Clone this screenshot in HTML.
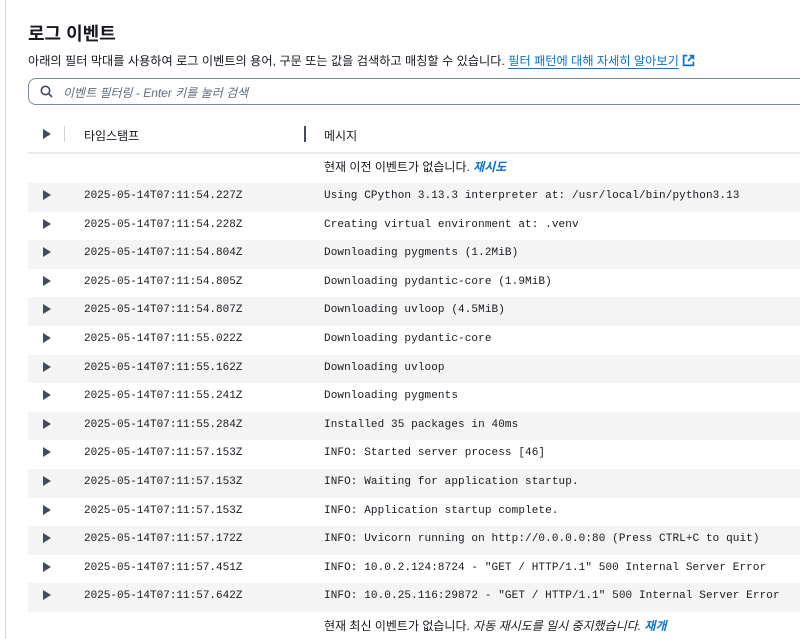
<!DOCTYPE html>
<html><head><meta charset="utf-8"><style>
body{margin:0;background:#fff;width:800px;height:639px;overflow:hidden;position:relative;font-family:"Liberation Sans","Noto Sans CJK KR",sans-serif;color:#16191f}
.vl{position:absolute;left:5px;top:0;width:1px;height:639px;background:#d5dbdb}
h1{position:absolute;left:28px;top:20px;margin:0;font-size:18px;font-weight:bold;color:#16191f}
.desc{position:absolute;left:28px;top:51px;font-size:12.2px;white-space:nowrap}
.desc a{color:#0972d3;text-decoration:none;border-bottom:1px solid #0972d3}
.search{position:absolute;left:28px;top:78px;width:800px;height:27px;border:1.5px solid #7d8998;border-radius:8px;box-sizing:border-box}
.search span{position:absolute;left:34px;top:5px;font-size:12px;font-style:italic;color:#5f6b7a}
.hdr{position:absolute;left:28px;top:118px;width:780px;height:34px;border-bottom:2px solid #e9ebed;font-size:12px;color:#16191f}
.row{position:absolute;left:28px;width:780px;height:28.6px;font-family:"Liberation Mono",monospace;font-size:11px;color:#16191f}
.row.g{background:#f4f4f4}
.row .t{position:absolute;left:56px;top:7px}
.row .m{position:absolute;left:296px;top:7px;white-space:nowrap;letter-spacing:0.1px}
.tri{position:absolute;left:15px;top:7px;width:0;height:0;border-left:8px solid #414d5c;border-top:5px solid transparent;border-bottom:5px solid transparent}
.note{position:absolute;left:324px;font-size:12px;white-space:nowrap}
.note a{color:#0972d3;font-style:italic;font-weight:bold;text-decoration:none}
</style></head><body>
<div class="vl"></div>
<h1>로그 이벤트</h1>
<div class="desc">아래의 필터 막대를 사용하여 로그 이벤트의 용어, 구문 또는 값을 검색하고 매칭할 수 있습니다. <a>필터 패턴에 대해 자세히 알아보기</a> <svg width="13" height="13" viewBox="0 0 12 12" style="vertical-align:-2px"><path d="M5 1.5H1.5v9h9V7" fill="none" stroke="#0972d3" stroke-width="1.6"/><path d="M7 1.5h3.5V5M10.5 1.5L5.5 6.5" fill="none" stroke="#0972d3" stroke-width="1.6"/></svg></div>
<div class="search"><svg style="position:absolute;left:11px;top:6px" width="13" height="13" viewBox="0 0 13 13"><circle cx="5.5" cy="5.5" r="4.2" fill="none" stroke="#414d5c" stroke-width="1.6"/><path d="M8.5 8.5L12 12" stroke="#414d5c" stroke-width="1.6"/></svg><span>이벤트 필터링 - Enter 키를 눌러 검색</span></div>
<div class="hdr"><div class="tri" style="top:11px"></div><div style="position:absolute;left:36px;top:8px;width:1px;height:16px;background:#d1d5db"></div><div style="position:absolute;left:56px;top:9px">타임스탬프</div><div style="position:absolute;left:276px;top:8px;width:2px;height:16px;background:#414d5c"></div><div style="position:absolute;left:296px;top:9px">메시지</div></div>
<div class="note" style="top:158px">현재 이전 이벤트가 없습니다. <a>재시도</a></div>
<div class="row g" style="top:183px"><div class="tri"></div><div class="t">2025-05-14T07:11:54.227Z</div><div class="m">Using CPython 3.13.3 interpreter at: /usr/local/bin/python3.13</div></div>
<div class="row" style="top:211.6px"><div class="tri"></div><div class="t">2025-05-14T07:11:54.228Z</div><div class="m">Creating virtual environment at: .venv</div></div>
<div class="row g" style="top:240.2px"><div class="tri"></div><div class="t">2025-05-14T07:11:54.804Z</div><div class="m">Downloading pygments (1.2MiB)</div></div>
<div class="row" style="top:268.8px"><div class="tri"></div><div class="t">2025-05-14T07:11:54.805Z</div><div class="m">Downloading pydantic-core (1.9MiB)</div></div>
<div class="row g" style="top:297.4px"><div class="tri"></div><div class="t">2025-05-14T07:11:54.807Z</div><div class="m">Downloading uvloop (4.5MiB)</div></div>
<div class="row" style="top:326px"><div class="tri"></div><div class="t">2025-05-14T07:11:55.022Z</div><div class="m">Downloading pydantic-core</div></div>
<div class="row g" style="top:354.6px"><div class="tri"></div><div class="t">2025-05-14T07:11:55.162Z</div><div class="m">Downloading uvloop</div></div>
<div class="row" style="top:383.2px"><div class="tri"></div><div class="t">2025-05-14T07:11:55.241Z</div><div class="m">Downloading pygments</div></div>
<div class="row g" style="top:411.8px"><div class="tri"></div><div class="t">2025-05-14T07:11:55.284Z</div><div class="m">Installed 35 packages in 40ms</div></div>
<div class="row" style="top:440.4px"><div class="tri"></div><div class="t">2025-05-14T07:11:57.153Z</div><div class="m">INFO: Started server process [46]</div></div>
<div class="row g" style="top:469px"><div class="tri"></div><div class="t">2025-05-14T07:11:57.153Z</div><div class="m">INFO: Waiting for application startup.</div></div>
<div class="row" style="top:497.6px"><div class="tri"></div><div class="t">2025-05-14T07:11:57.153Z</div><div class="m">INFO: Application startup complete.</div></div>
<div class="row g" style="top:526.2px"><div class="tri"></div><div class="t">2025-05-14T07:11:57.172Z</div><div class="m">INFO: Uvicorn running on http://0.0.0.0:80 (Press CTRL+C to quit)</div></div>
<div class="row" style="top:554.8px"><div class="tri"></div><div class="t">2025-05-14T07:11:57.451Z</div><div class="m">INFO: 10.0.2.124:8724 - "GET / HTTP/1.1" 500 Internal Server Error</div></div>
<div class="row g" style="top:583.4px"><div class="tri"></div><div class="t">2025-05-14T07:11:57.642Z</div><div class="m">INFO: 10.0.25.116:29872 - "GET / HTTP/1.1" 500 Internal Server Error</div></div>
<div class="note" style="top:617px">현재 최신 이벤트가 없습니다. <i>자동 재시도를 일시 중지했습니다.</i> <a>재개</a></div>
</body></html>
